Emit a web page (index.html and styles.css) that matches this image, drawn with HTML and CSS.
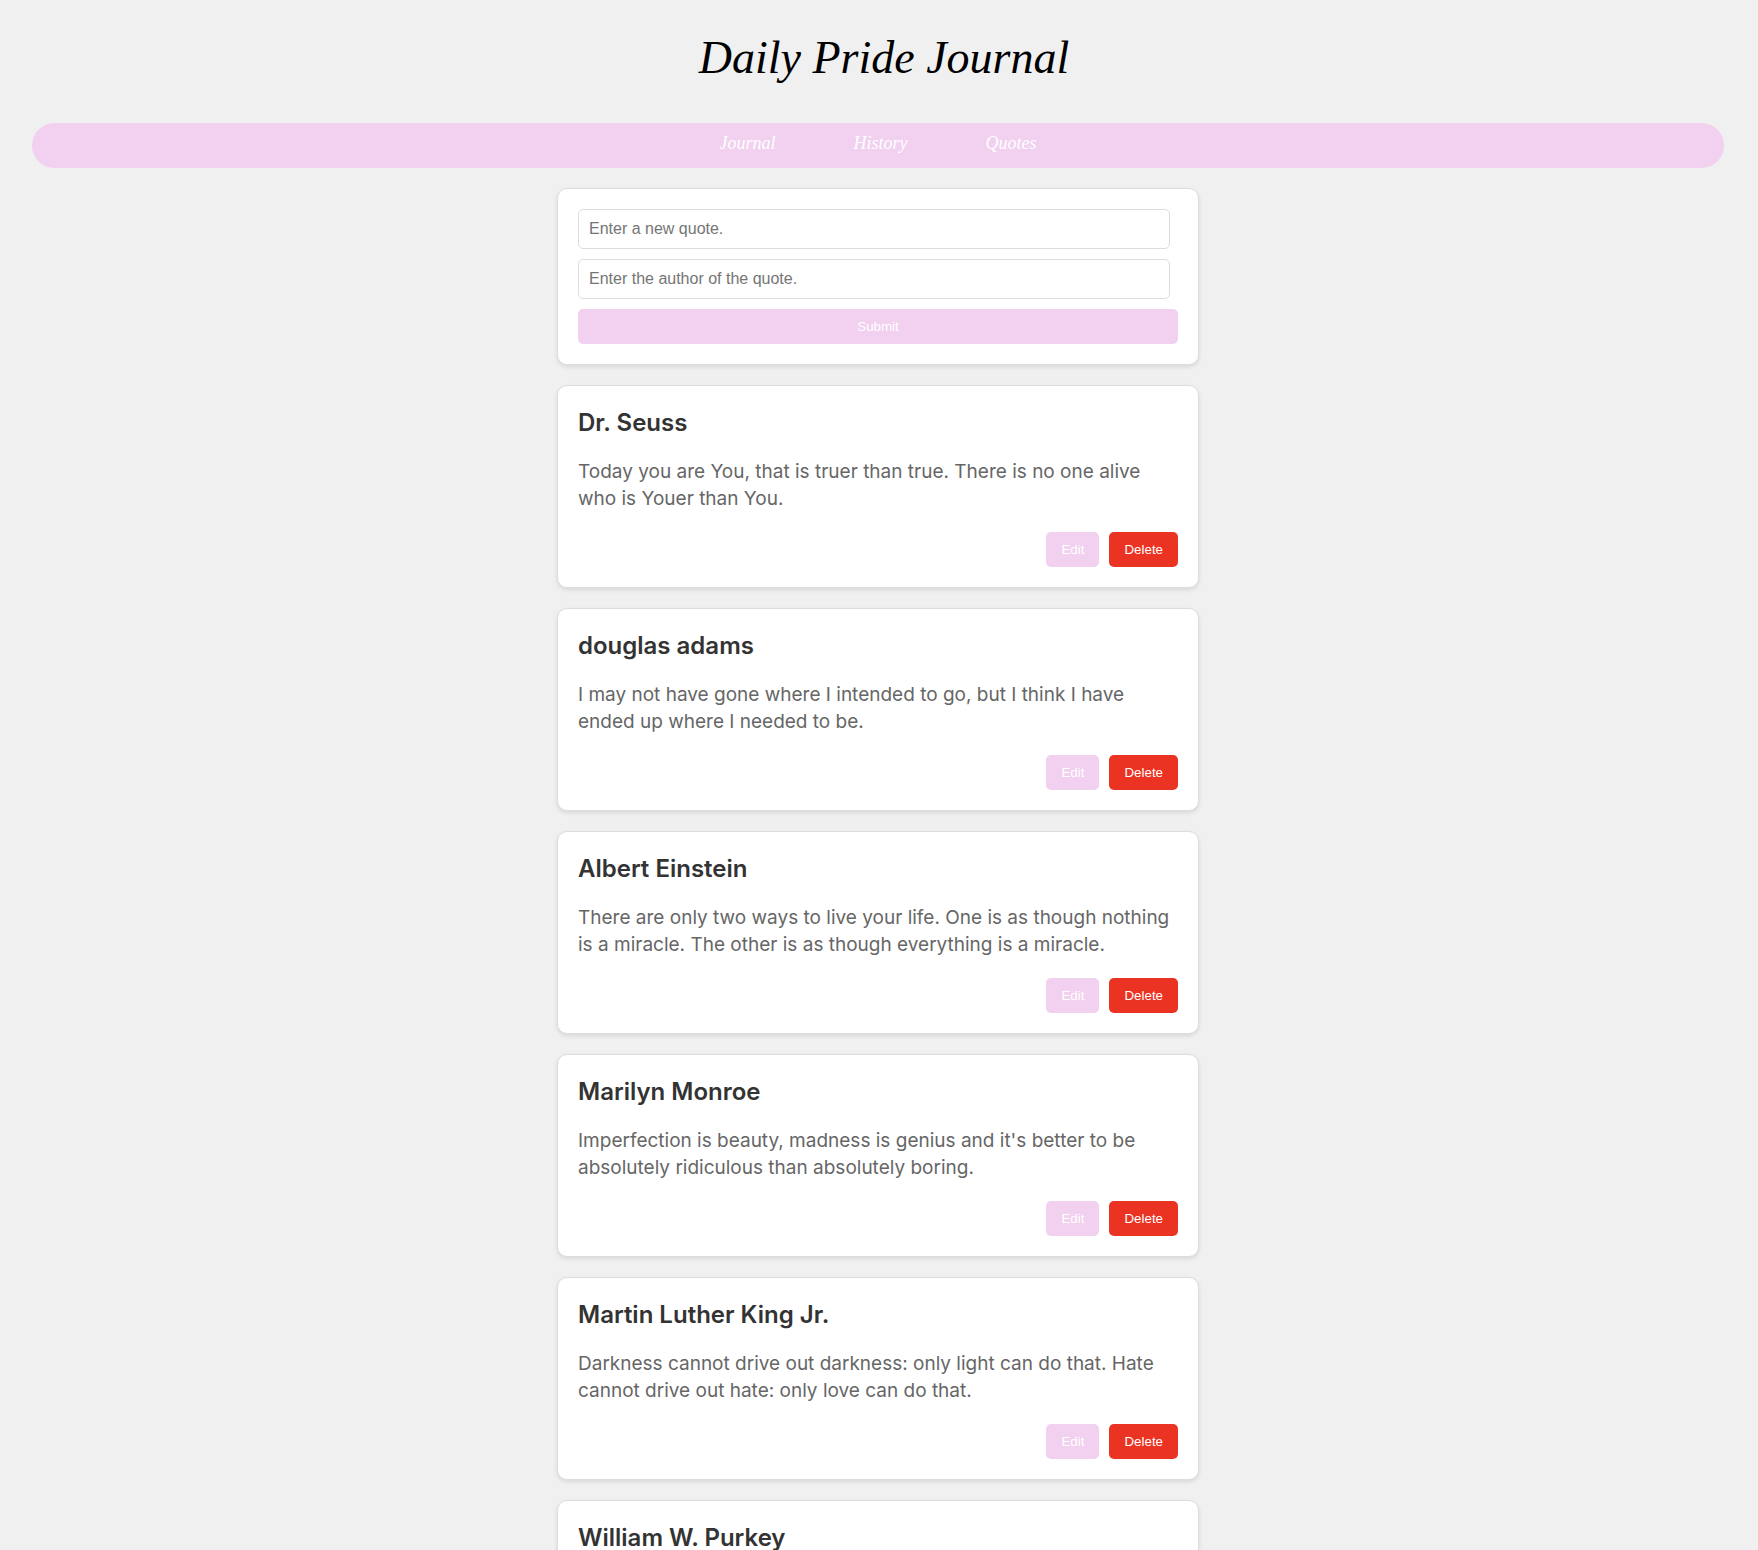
FILE: index.html
```html
<!DOCTYPE html>
<html lang="en">
<head>
  <meta charset="utf-8">
  <meta name="viewport" content="width=device-width, initial-scale=1">
  <title>Daily Pride Journal</title>
  <link rel="stylesheet" href="styles.css">
</head>
<body>
  <header>
    <h1 class="site-title">Daily Pride Journal</h1>
    <nav class="nav">
      <a class="nav-link" href="#journal">Journal</a>
      <a class="nav-link" href="#history">History</a>
      <a class="nav-link" href="#quotes">Quotes</a>
    </nav>
  </header>
  <main class="quotes">
    <form class="card quote-form">
      <input class="field" type="text" placeholder="Enter a new quote." aria-label="Enter a new quote.">
      <input class="field" type="text" placeholder="Enter the author of the quote." aria-label="Enter the author of the quote.">
      <button class="button" type="submit">Submit</button>
    </form>
    <article class="card">
      <h2 class="author">Dr. Seuss</h2>
      <p class="quote">Today you are You, that is truer than true. There is no one alive who is Youer than You.</p>
      <div class="actions">
        <button class="button" type="button">Edit</button>
        <button class="button button-delete" type="button">Delete</button>
      </div>
    </article>
    <article class="card">
      <h2 class="author">douglas adams</h2>
      <p class="quote">I may not have gone where I intended to go, but I think I have ended up where I needed to be.</p>
      <div class="actions">
        <button class="button" type="button">Edit</button>
        <button class="button button-delete" type="button">Delete</button>
      </div>
    </article>
    <article class="card">
      <h2 class="author">Albert Einstein</h2>
      <p class="quote">There are only two ways to live your life. One is as though nothing is a miracle. The other is as though everything is a miracle.</p>
      <div class="actions">
        <button class="button" type="button">Edit</button>
        <button class="button button-delete" type="button">Delete</button>
      </div>
    </article>
    <article class="card">
      <h2 class="author">Marilyn Monroe</h2>
      <p class="quote">Imperfection is beauty, madness is genius and it's better to be absolutely ridiculous than absolutely boring.</p>
      <div class="actions">
        <button class="button" type="button">Edit</button>
        <button class="button button-delete" type="button">Delete</button>
      </div>
    </article>
    <article class="card">
      <h2 class="author">Martin Luther King Jr.</h2>
      <p class="quote">Darkness cannot drive out darkness: only light can do that. Hate cannot drive out hate: only love can do that.</p>
      <div class="actions">
        <button class="button" type="button">Edit</button>
        <button class="button button-delete" type="button">Delete</button>
      </div>
    </article>
    <article class="card">
      <h2 class="author">William W. Purkey</h2>
    </article>
  </main>
</body>
</html>
```
FILE: styles.css
```css
* {
  box-sizing: border-box;
}

body {
  margin: 0;
  padding: 26px 2px 0 0;
  background: #f0f0f0;
  font-family: Inter, sans-serif;
}

.site-title {
  margin: 0 0 33px;
  padding-left: 12px;
  font: italic 400 46px/64px "Liberation Serif", cursive;
  text-align: center;
  color: #000;
}

.nav {
  display: flex;
  justify-content: center;
  gap: 78px;
  height: 45px;
  margin: 0 32px;
  padding-top: 8px;
  border-radius: 24px;
  background: #f1d0f0;
}

.nav-link {
  font: italic 400 18px/24px "Liberation Serif", cursive;
  color: #fff;
  text-decoration: none;
}

.quotes {
  display: flex;
  flex-direction: column;
  gap: 20px;
  max-width: 642px;
  margin: 20px auto;
}

.card {
  padding: 20px;
  border: 1px solid #ddd;
  border-radius: 10px;
  background: #fff;
  box-shadow: 0 2px 4px rgba(0, 0, 0, 0.1);
}

.quote-form {
  display: flex;
  flex-direction: column;
  gap: 10px;
}

.field {
  height: 40px;
  margin-right: 8px;
  padding: 0 10px;
  border: 1px solid #ddd;
  border-radius: 5px;
  background: #fff;
  font: 16px "Liberation Sans", sans-serif;
}

.field::placeholder {
  color: #757575;
}

.button {
  min-width: 53px;
  height: 35px;
  padding: 0 15px;
  border: 0;
  border-radius: 5px;
  background: #f1d0f0;
  color: #fff;
  font-family: "Liberation Sans", sans-serif;
  cursor: pointer;
}

.button-delete {
  background: #eb3323;
}

.author {
  margin: 0 0 18px;
  font-size: 24px;
  font-weight: 600;
  line-height: 34px;
  color: #333;
}

.quote {
  margin: 0 0 20px;
  font-size: 19px;
  line-height: 27px;
  color: #666;
}

.actions {
  display: flex;
  justify-content: flex-end;
  gap: 10px;
}
```
